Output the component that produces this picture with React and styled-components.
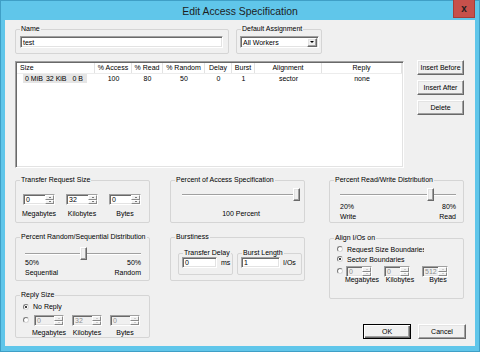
import React from "react";
import styled, { createGlobalStyle, css } from "styled-components";

const FONT = `"Liberation Sans", Arial, sans-serif`;

const GlobalStyle = createGlobalStyle`
  * { box-sizing: border-box; }
  html, body { margin: 0; padding: 0; }
  body {
    font-family: ${FONT};
    font-size: 7px;
    color: #000;
    overflow: hidden;
  }
`;

const Window = styled.div`
  width: 480px;
  height: 352px;
  display: flex;
  flex-direction: column;
  padding: 0 4px 5px;
  background: #60c6ea;
  border: 1px solid #3f9fc6;
`;

const TitleBar = styled.div`
  height: 19px;
  display: grid;
  grid-template-columns: 1fr auto 1fr;
  align-items: center;
`;

const Title = styled.div`
  grid-column: 2;
  font-size: 10.4px;
  color: #1d1d1d;
  padding-top: 1px;
  white-space: nowrap;
`;

const CloseButton = styled.div`
  grid-column: 3;
  justify-self: end;
  align-self: start;
  width: 22px;
  height: 18px;
  margin-top: -1px;
  background: #c7504b;
  border: 1px solid #a63d38;
  border-top: none;
  display: flex;
  align-items: center;
  justify-content: center;
  font: bold 10px ${FONT};
  line-height: 1;
  color: #1e1e1e;
`;

const Client = styled.div`
  flex: 1;
  background: #f0f0f0;
  padding: 9px 0 0 10px;
  display: flex;
  flex-direction: column;
`;

const TopRow = styled.div`
  display: flex;
  gap: 7px;
`;

const Group = styled.div`
  position: relative;
  flex-shrink: 0;
  width: ${(p) => p.$w}px;
  height: ${(p) => p.$h}px;
  padding: ${(p) => p.$pad || "0"};
  border: 1px solid #d5d5d5;
  border-radius: 2px;
`;

const Caption = styled.span`
  position: absolute;
  top: -5px;
  left: 4px;
  padding: 0 1px;
  line-height: 8px;
  background: #f0f0f0;
  white-space: nowrap;
`;

const sunken = css`
  border: 1px solid;
  border-color: #a0a0a0 #ffffff #ffffff #a0a0a0;
  box-shadow: inset 1px 1px 0 #696969, inset -1px -1px 0 #e3e3e3;
`;

const raised = css`
  background: #f0f0f0;
  border: 1px solid;
  border-color: #ffffff #696969 #696969 #ffffff;
  box-shadow: inset -1px -1px 0 #a0a0a0, inset 1px 1px 0 #e3e3e3;
`;

const Edit = styled.div`
  ${sunken};
  width: ${(p) => p.$w}px;
  height: ${(p) => p.$h || 11}px;
  display: flex;
  align-items: center;
  padding-left: 2px;
  line-height: 7px;
  white-space: nowrap;
  flex-shrink: 0;
  background: ${(p) => (p.$disabled ? "#f0f0f0" : "#ffffff")};
  color: ${(p) => (p.$disabled ? "#8d8d8d" : "#000")};
`;

const DropButton = styled.div`
  ${raised};
  margin-left: auto;
  margin-right: 1px;
  width: 10px;
  height: 9px;
  display: flex;
  align-items: center;
  justify-content: center;
`;

const Arrow = styled.span`
  width: 0;
  height: 0;
  border-left: ${(p) => p.$size || 2}px solid transparent;
  border-right: ${(p) => p.$size || 2}px solid transparent;
  ${(p) =>
    p.$up
      ? css`border-bottom: ${p.$size || 2}px solid ${p.$color || "#000"};`
      : css`border-top: ${p.$size || 2}px solid ${p.$color || "#000"};`}
`;

const SpinButtons = styled.div`
  margin-left: auto;
  width: 9px;
  height: 100%;
  display: flex;
  flex-direction: column;
`;

const SpinButton = styled.div`
  flex: 1;
  display: flex;
  align-items: center;
  justify-content: center;
  background: #f0f0f0;
  border: 1px solid;
  border-color: #ffffff #8a8a8a #8a8a8a #ffffff;
`;

function Spin({ value, w, disabled }) {
  const c = disabled ? "#a8a8a8" : "#000";
  return (
    <Edit $w={w} $disabled={disabled}>
      {value}
      <SpinButtons>
        <SpinButton>
          <Arrow $up $size={1.5} $color={c} />
        </SpinButton>
        <SpinButton>
          <Arrow $size={1.5} $color={c} />
        </SpinButton>
      </SpinButtons>
    </Edit>
  );
}

const ListArea = styled.div`
  display: flex;
  align-items: flex-start;
  margin-top: 6px;
`;

const COLS = "78px 37px 31px 42px 27px 23px 67px 80px";

const ListView = styled.div`
  ${sunken};
  width: 389px;
  height: 107px;
  margin-top: 1px;
  padding: 1px;
  background: #fff;
  overflow: hidden;
`;

const HeaderRow = styled.div`
  display: grid;
  grid-template-columns: ${COLS};
  border-bottom: 1px solid #ececec;
`;

const HeadCell = styled.div`
  height: 10px;
  line-height: 10px;
  text-align: ${(p) => (p.$left ? "left" : "center")};
  padding-left: ${(p) => (p.$left ? 3 : 0)}px;
  border-right: 1px solid #e2e2e2;
  white-space: nowrap;
  overflow: hidden;
`;

const DataRow = styled.div`
  display: grid;
  grid-template-columns: ${COLS};
`;

const Cell = styled.div`
  height: 9px;
  line-height: 9px;
  text-align: center;
  white-space: nowrap;
`;

const Selection = styled.span`
  display: inline-block;
  margin-left: 6px;
  padding: 0 4px 0 2px;
  background: #e5e5e5;
`;

const SizePart = styled.span`
  margin-left: ${(p) => p.$ml || 0}px;
`;

const SideButtons = styled.div`
  display: flex;
  flex-direction: column;
  gap: 5px;
  margin-left: 13px;
`;

const Button = styled.button`
  ${raised};
  width: ${(p) => p.$w}px;
  height: 15px;
  padding: 0;
  font: 7px ${FONT};
  color: #000;
  ${(p) =>
    p.$default &&
    css`
      border-color: #000;
      box-shadow: inset 1px 1px 0 #ffffff, inset -1px -1px 0 #696969,
        inset -2px -2px 0 #a0a0a0;
    `}
`;

const Panels = styled.div`
  display: flex;
  margin-top: 12px;
`;

const Column = styled.div`
  display: flex;
  flex-direction: column;
  width: 135px;
  gap: ${(p) => p.$gap || 14}px;
  margin-left: ${(p) => p.$ml || 0}px;
`;

const SpinRow = styled.div`
  display: flex;
  align-items: flex-start;
  gap: ${(p) => p.$gap}px;
`;

const SpinCol = styled.div`
  display: flex;
  flex-direction: column;
  align-items: ${(p) => (p.$start ? "flex-start" : "center")};
  width: ${(p) => p.$w}px;
`;

const SpinLabel = styled.div`
  align-self: center;
  white-space: nowrap;
  margin-top: ${(p) => p.$mt}px;
  line-height: ${(p) => p.$lh || 8}px;
`;

const SliderBox = styled.div`
  position: relative;
  width: ${(p) => p.$w}px;
  height: 13px;
  display: flex;
  align-items: center;
`;

const Track = styled.div`
  width: 100%;
  height: 2px;
  border-top: 1px solid #a0a0a0;
  border-bottom: 1px solid #ffffff;
`;

const Thumb = styled.div`
  ${raised};
  position: absolute;
  top: 0;
  width: 7px;
  height: 13px;
`;

function Slider({ value, w }) {
  const left = Math.round(((w - 7) * value) / 100);
  return (
    <SliderBox $w={w}>
      <Track />
      <Thumb style={{ left }} />
    </SliderBox>
  );
}

const SliderLabel = styled.div`
  width: ${(p) => p.$w}px;
  margin-top: ${(p) => p.$mt}px;
  line-height: 8px;
  text-align: center;
`;

const Ends = styled.div`
  display: flex;
  justify-content: space-between;
  width: ${(p) => p.$w}px;
  margin-top: ${(p) => p.$mt}px;
  line-height: 10px;
`;

const End = styled.div`
  text-align: ${(p) => (p.$right ? "right" : "left")};
`;

const InnerRow = styled.div`
  display: flex;
  gap: 4px;
`;

const Field = styled.div`
  display: flex;
  align-items: center;
  gap: ${(p) => p.$gap}px;
`;

const Option = styled.div`
  display: flex;
  align-items: ${(p) => (p.$top ? "flex-start" : "center")};
  height: ${(p) => (p.$h ? `${p.$h}px` : "auto")};
  margin-top: ${(p) => p.$mt || 0}px;
  gap: ${(p) => p.$gap || 4}px;
`;

const Radio = styled.span`
  position: relative;
  flex-shrink: 0;
  width: 6px;
  height: 6px;
  margin-top: ${(p) => p.$mt || 0}px;
  border-radius: 50%;
  background: #fff;
  border: 1px solid;
  border-color: #7a7a7a #d8d8d8 #d8d8d8 #7a7a7a;
  ${(p) =>
    p.$checked &&
    css`
      &::after {
        content: "";
        position: absolute;
        left: 1px;
        top: 1px;
        width: 2px;
        height: 2px;
        border-radius: 50%;
        background: #000;
      }
    `}
`;

const Clip = styled.span`
  display: inline-block;
  width: ${(p) => p.$w}px;
  overflow: hidden;
  white-space: nowrap;
`;

const DialogButtons = styled.div`
  display: flex;
  justify-content: flex-end;
  gap: 7px;
  margin-top: 25px;
  margin-right: -2px;
`;

const HEADERS = ["Size", "% Access", "% Read", "% Random", "Delay", "Burst", "Alignment", "Reply"];
const ROW = ["100", "80", "50", "0", "1", "sector", "none"];

function SizeSpins({ values, labels, colW, spinW, gap, disabled, labelMt, labelLh, start }) {
  return (
    <SpinRow $gap={gap}>
      {values.map((v, i) => (
        <SpinCol key={labels[i]} $w={colW} $start={start}>
          <Spin value={v} w={spinW} disabled={disabled} />
          <SpinLabel $mt={labelMt} $lh={labelLh}>
            {labels[i]}
          </SpinLabel>
        </SpinCol>
      ))}
    </SpinRow>
  );
}

const UNITS = ["Megabytes", "Kilobytes", "Bytes"];

export default function App() {
  return (
    <>
      <GlobalStyle />
      <Window>
        <TitleBar>
          <Title>Edit Access Specification</Title>
          <CloseButton>x</CloseButton>
        </TitleBar>
        <Client>
          <TopRow>
            <Group $w={214} $h={25} $pad="6px 0 0 4px">
              <Caption>Name</Caption>
              <Edit $w={203} $h={12}>test</Edit>
            </Group>
            <Group $w={86} $h={25} $pad="6px 0 0 3px">
              <Caption>Default Assignment</Caption>
              <Edit $w={79} $h={12}>
                All Workers
                <DropButton>
                  <Arrow />
                </DropButton>
              </Edit>
            </Group>
          </TopRow>

          <ListArea>
            <ListView>
              <HeaderRow>
                {HEADERS.map((h, i) => (
                  <HeadCell key={h} $left={i === 0}>
                    {h}
                  </HeadCell>
                ))}
              </HeaderRow>
              <DataRow>
                <Cell style={{ textAlign: "left" }}>
                  <Selection>
                    <SizePart>0 MiB</SizePart>
                    <SizePart $ml={3}>32 KiB</SizePart>
                    <SizePart $ml={6}>0 B</SizePart>
                  </Selection>
                </Cell>
                {ROW.map((v, i) => (
                  <Cell key={i}>{v}</Cell>
                ))}
              </DataRow>
            </ListView>
            <SideButtons>
              <Button $w={47}>Insert Before</Button>
              <Button $w={47}>Insert After</Button>
              <Button $w={47}>Delete</Button>
            </SideButtons>
          </ListArea>

          <Panels>
            <Column>
              <Group $w={135} $h={43} $pad="13px 0 0 7px">
                <Caption>Transfer Request Size</Caption>
                <SizeSpins
                  values={["0", "32", "0"]}
                  labels={UNITS}
                  colW={32}
                  spinW={32}
                  gap={11}
                  labelMt={5}
                />
              </Group>
              <Group $w={135} $h={44} $pad="9px 0 0 9px">
                <Caption>Percent Random/Sequential Distribution</Caption>
                <Slider value={50} w={116} />
                <Ends $w={116} $mt={-2}>
                  <End>
                    50%
                    <br />
                    Sequential
                  </End>
                  <End $right>
                    50%
                    <br />
                    Random
                  </End>
                </Ends>
              </Group>
              <Group $w={135} $h={43} $pad="5px 0 0 7px">
                <Caption>Reply Size</Caption>
                <Option $h={11}>
                  <Radio $checked />
                  No Reply
                </Option>
                <Option $top $mt={3} $gap={5}>
                  <Radio $mt={2} />
                  <SizeSpins
                    values={["0", "32", "0"]}
                    labels={UNITS}
                    colW={30}
                    spinW={30}
                    gap={8}
                    disabled
                    labelMt={3}
                  />
                </Option>
              </Group>
            </Column>

            <Column $ml={20}>
              <Group $w={135} $h={43} $pad="7px 0 0 11px">
                <Caption>Percent of Access Specification</Caption>
                <Slider value={100} w={118} />
                <SliderLabel $w={118} $mt={9}>
                  100 Percent
                </SliderLabel>
              </Group>
              <Group $w={135} $h={44} $pad="15px 0 0 7px">
                <Caption>Burstiness</Caption>
                <InnerRow>
                  <Group $w={55} $h={22} $pad="3px 0 0 3px">
                    <Caption>Transfer Delay</Caption>
                    <Field $gap={4}>
                      <Edit $w={35}>0</Edit>
                      ms
                    </Field>
                  </Group>
                  <Group $w={65} $h={22} $pad="3px 0 0 3px">
                    <Caption>Burst Length</Caption>
                    <Field $gap={3}>
                      <Edit $w={39}>1</Edit>
                      I/Os
                    </Field>
                  </Group>
                </InnerRow>
              </Group>
            </Column>

            <Column $ml={24} $gap={15}>
              <Group $w={135} $h={43} $pad="7px 0 0 10px">
                <Caption>Percent Read/Write Distribution</Caption>
                <Slider value={80} w={116} />
                <Ends $w={116} $mt={1}>
                  <End>
                    20%
                    <br />
                    Write
                  </End>
                  <End $right>
                    80%
                    <br />
                    Read
                  </End>
                </Ends>
              </Group>
              <div>
                <Group $w={135} $h={61} $pad="5px 0 0 7px">
                  <Caption>Align I/Os on</Caption>
                  <Option $h={10}>
                    <Radio />
                    <Clip $w={77}>Request Size Boundaries</Clip>
                  </Option>
                  <Option $h={10}>
                    <Radio $checked />
                    Sector Boundaries
                  </Option>
                  <Option $top $mt={2} $gap={3}>
                    <Radio $mt={2} />
                    <SizeSpins
                      values={["0", "0", "512"]}
                      labels={UNITS}
                      colW={32}
                      spinW={26}
                      gap={6}
                      disabled
                      start
                      labelMt={-1}
                      labelLh={7}
                    />
                  </Option>
                </Group>
                <DialogButtons>
                  <Button $w={48} $default>
                    OK
                  </Button>
                  <Button $w={48}>Cancel</Button>
                </DialogButtons>
              </div>
            </Column>
          </Panels>
        </Client>
      </Window>
    </>
  );
}
